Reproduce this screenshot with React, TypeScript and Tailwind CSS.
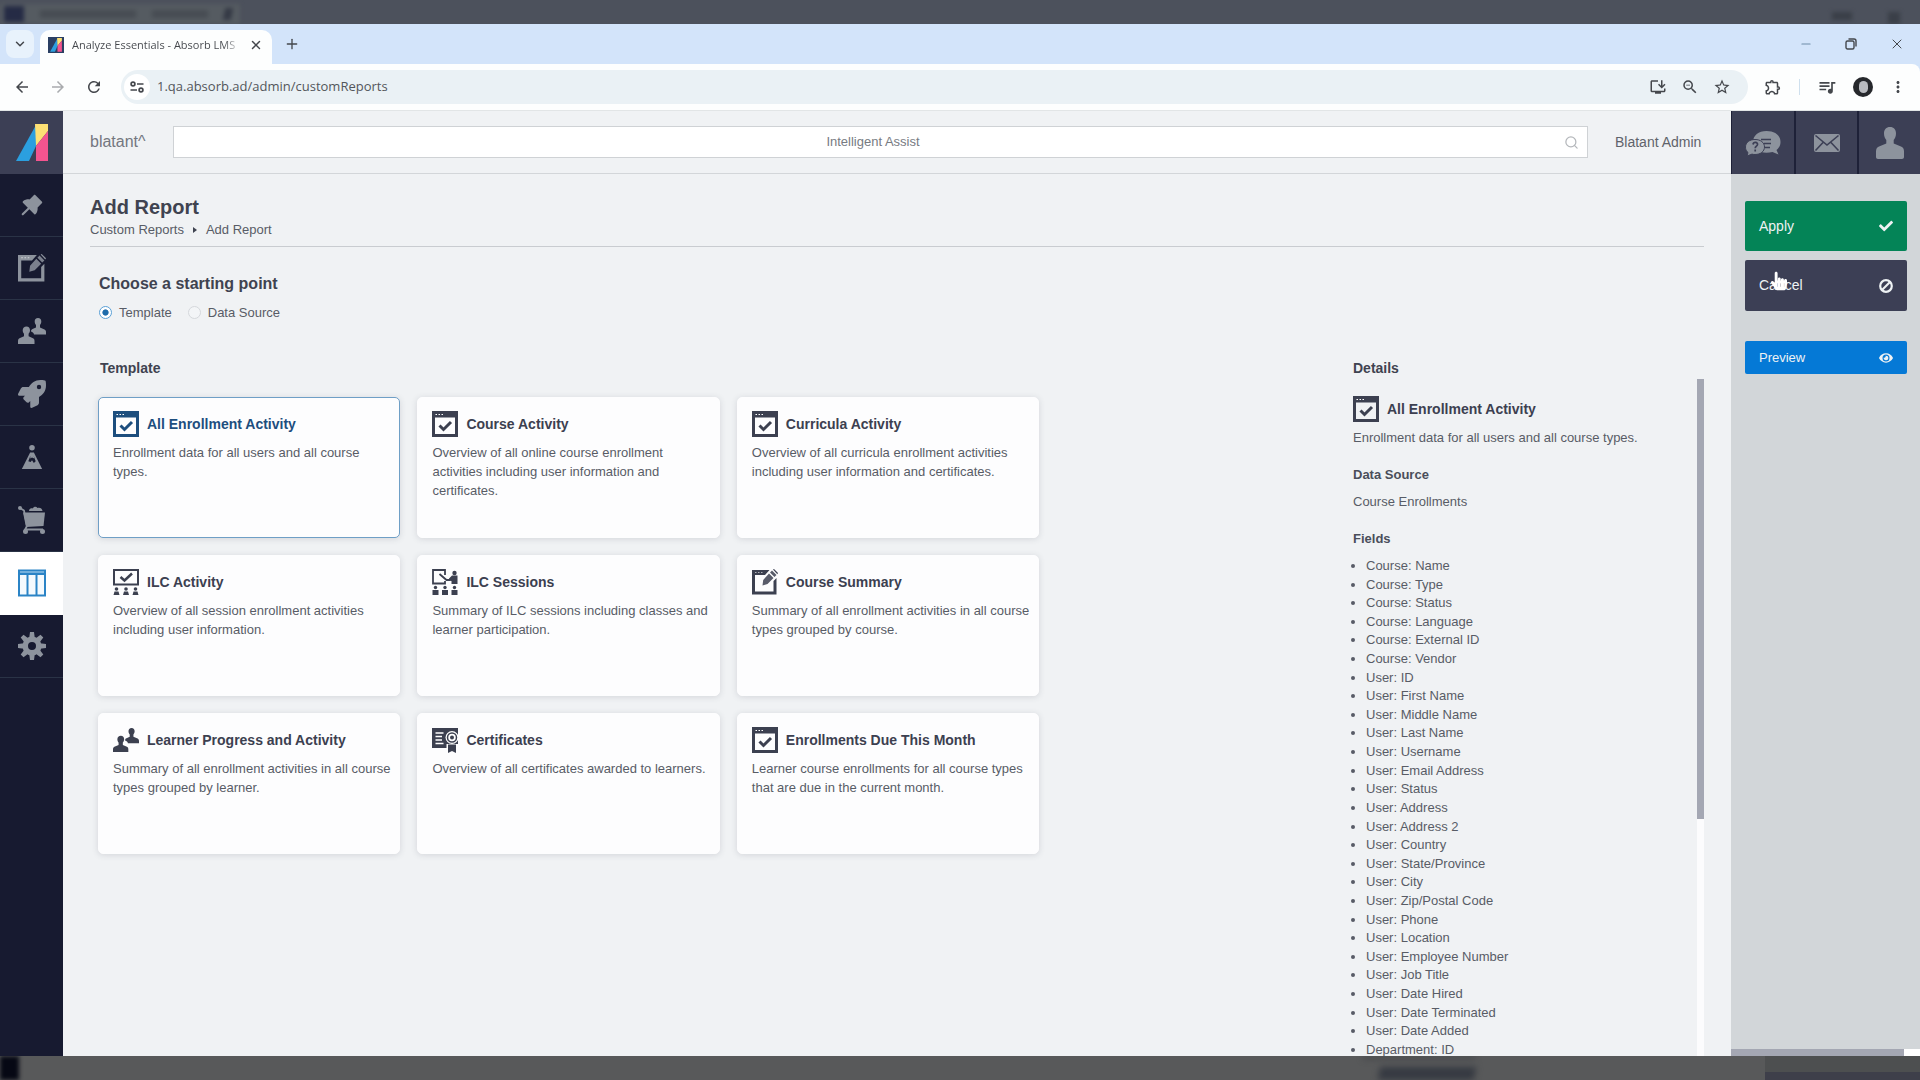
import type { ReactNode } from "react"
import clsx from "clsx"
import { AiFillPushpin } from "react-icons/ai"
import { FaCheck, FaEye, FaHandPointer, FaRocket } from "react-icons/fa"
import {
  MdArrowBack,
  MdArrowForward,
  MdInstallDesktop,
  MdMoreVert,
  MdOutlineExtension,
  MdQueueMusic,
  MdRefresh,
  MdStarBorder,
  MdZoomOut,
} from "react-icons/md"
import { ChevronDown, Minus, Plus, Search, X } from "lucide-react"

type IconProps = { className?: string }

function AbsorbLogo({ className }: IconProps) {
  return (
    <svg viewBox="0 0 32 38" className={className} aria-hidden="true">
      <path d="M20 1v21L13 37H0z" fill="#2b9fdf" />
      <path d="M19 0h13v7L20 22z" fill="#fde074" />
      <path d="M32 7v30H20V22z" fill="#f4548f" />
    </svg>
  )
}

function WindowCheckIcon({ className }: IconProps) {
  return (
    <svg viewBox="0 0 26 26" className={className} aria-hidden="true">
      <path fillRule="evenodd" fill="currentColor" d="M0 0h26v26H0zM3 6.500v16.500h20V6.500z" />
      <path d="M3.500 3.500h1.500M6.500 3.500h1.500M9.500 3.500h1.500" stroke="#fff" strokeWidth="1.200" />
      <path d="M7.500 14.500l4 4 7.500-7.500" fill="none" stroke="currentColor" strokeWidth="3" />
    </svg>
  )
}

function WindowEditIcon({ className }: IconProps) {
  return (
    <svg viewBox="0 0 26 26" className={className} aria-hidden="true">
      <path
        fill="currentColor"
        d="M0 1h17.500l-4.500 5H3v16.500h18.500V12l3-3v16.500H0z"
      />
      <path d="M3 3.500h1.500M6 3.500h1.500M9 3.500h1.500" stroke="#fff" strokeWidth="1" opacity="0.600" />
      <path fill="currentColor" d="M20 1.500l4.500 4.500-2 2L18 3.500zM17 4.500l4.500 4.500-6 6-5 1.500.7-5.500z" opacity="0.850" />
      <path fill="currentColor" d="M21 .5l1-.5 4 4-.7 1.200z" />
    </svg>
  )
}

function PresentationIcon({ className }: IconProps) {
  return (
    <svg viewBox="0 0 26 26" className={className} aria-hidden="true">
      <path d="M1 1h24v14.500H1z" fill="none" stroke="currentColor" strokeWidth="2" />
      <path d="M7.500 8l4 3.500L19 4.500" fill="none" stroke="currentColor" strokeWidth="2.500" />
      <g fill="currentColor">
        <circle cx="3.500" cy="20" r="1.800" />
        <circle cx="13" cy="20" r="1.800" />
        <circle cx="22.500" cy="20" r="1.800" />
        <path d="M.5 26l1-3.500h4l1 3.500zM10 26l1-3.500h4l1 3.500zM19.500 26l1-3.500h4l1 3.500z" />
      </g>
    </svg>
  )
}

function SessionsIcon({ className }: IconProps) {
  return (
    <svg viewBox="0 0 26 26" className={className} aria-hidden="true">
      <path d="M13 6V1H1v13.500h12V12M7.500 5l7 6h4" fill="none" stroke="currentColor" strokeWidth="1.800" />
      <g fill="currentColor">
        <circle cx="22.500" cy="4" r="2.200" />
        <path d="M20 6.500h5.500V15h-6v-3L17 11.500V9.500zM.5 21h6v5h-6zM10 21h6v5h-6zM19.500 21h6v5h-6z" />
        <circle cx="3.500" cy="18.500" r="1.700" />
        <circle cx="13" cy="18.500" r="1.700" />
        <circle cx="22.500" cy="18.500" r="1.700" />
      </g>
    </svg>
  )
}

function PeopleIcon({ className }: IconProps) {
  return (
    <svg viewBox="0 0 28 26" className={className} aria-hidden="true" fill="currentColor">
      <path d="M20 0c2.200 0 3.300 1.500 3.300 3.500 0 1.500-.6 2.500-1.300 3.500v2.500l4.500 2c1 .5 1.500 1.500 1.500 2.500v2.500h-12c0-1.500-1.500-2.500-3-3 0-1.500.5-2 1.500-2.500l3.500-1.500V7c-.8-1-1.300-2-1.300-3.500C16.700 1.500 17.800 0 20 0z" />
      <path d="M8.500 8.500c2.200 0 3.500 1.500 3.500 3.700 0 1.500-.6 2.600-1.400 3.600v2.500l4.400 1.900c1.200.5 1.500 1.500 1.500 2.800v3H0v-3c0-1.300.5-2.300 1.500-2.800l4.500-1.900v-2.500c-.8-1-1.300-2.100-1.300-3.600 0-2.200 1.600-3.700 3.800-3.700z" />
    </svg>
  )
}

function CertificateIcon({ className }: IconProps) {
  return (
    <svg viewBox="0 0 26 26" className={className} aria-hidden="true">
      <path d="M0 1h26v20H0z" fill="currentColor" />
      <path d="M3.500 6h8M3.500 9.500h6.500M3.500 13h6.500M3.500 16.500h8" stroke="#fff" strokeWidth="1.500" />
      <path d="M14.500 17h11.500v5H14.500z" fill="#fff" />
      <circle cx="20" cy="10.500" r="6.500" fill="#fff" />
      <circle cx="20" cy="10.500" r="4.500" fill="none" stroke="currentColor" strokeWidth="1.500" />
      <circle cx="20" cy="10.500" r="2" fill="currentColor" />
      <path d="M16 17.500h8V26l-4-2-4 2z" fill="currentColor" />
    </svg>
  )
}

function PeakIcon({ className }: IconProps) {
  return (
    <svg viewBox="0 0 22 26" className={className} aria-hidden="true">
      <circle cx="11" cy="3" r="3" fill="currentColor" />
      <path d="M9 8h4l9 18H0z" fill="currentColor" />
      <path d="M7 17.500l2-5h4l2 5-2 2-2-3-1.500 2z" fill="#171a30" />
      <path d="M9.500 10.500h3l1 4-2.500-1-2 1z" fill="currentColor" />
    </svg>
  )
}

function CartIcon({ className }: IconProps) {
  return (
    <svg viewBox="0 0 28 28" className={className} aria-hidden="true">
      <g fill="currentColor">
        <path d="M5 6.500h22L25.500 20 8 21z" />
        <path d="M11 5c0-2 2-3 3.500-2.500C16 .5 18 0 19.500 2c2-1 4.500 0 5 3z" />
        <circle cx="2" cy="2" r="2" />
        <circle cx="7.500" cy="25.500" r="2.500" />
        <circle cx="24.500" cy="25.500" r="2.500" />
      </g>
      <path d="M2 2l4 2.500L9 20l-2 3.500h18" fill="none" stroke="currentColor" strokeWidth="1.800" />
    </svg>
  )
}

function ColumnsIcon({ className }: IconProps) {
  return (
    <svg viewBox="0 0 28 27" className={className} aria-hidden="true">
      <path d="M0 0h28v27H0z" fill="#2b84c6" />
      <path d="M2 5.500h6.500V25H2zM10.500 5.500h7V25h-7zM19.500 5.500H26V25h-6.500z" fill="#f4fafe" />
      <path d="M2 2.500h24" stroke="#8dbfe4" strokeWidth="1.500" />
    </svg>
  )
}

function GearIcon({ className }: IconProps) {
  return (
    <svg viewBox="0 0 28 28" className={className} aria-hidden="true" fill="currentColor">
      <path d="M12 0h4l.8 6h-5.600zM12 28h4l.8-6h-5.600zM0 12v4l6 .8v-5.600zM28 12v4l-6 .8v-5.600z" />
      <path d="M2.700 5.500l2.800-2.800L10.500 6.500 6.500 10.500zM25.300 5.500l-2.800-2.800-5 3.800 4 4zM2.700 22.500l2.800 2.800 5-3.800-4-4zM25.300 22.500l-2.800 2.800-5-3.800 4-4z" />
      <path fillRule="evenodd" d="M14 4.500a9.500 9.500 0 1 0 0 19 9.500 9.500 0 0 0 0-19zM14 10a4 4 0 1 1 0 8 4 4 0 0 1 0-8z" />
    </svg>
  )
}

function CancelIcon({ className }: IconProps) {
  return (
    <svg viewBox="0 0 14 14" className={className} aria-hidden="true" fill="none" stroke="currentColor" strokeWidth="2.200">
      <circle cx="7" cy="7" r="5.800" />
      <path d="M11 3l-8 8" />
    </svg>
  )
}

function ChatIcon({ className }: IconProps) {
  return (
    <svg viewBox="0 0 36 26" className={className} aria-hidden="true">
      <path
        d="M21.500 1C30 1 35.500 5.500 35.500 12c0 3.500-1.500 6-4 8l2 4.500-6-2.500c-2 .6-4 .8-6 .8-8 0-13.500-4.300-13.500-10.800S13.500 1 21.500 1z"
        fill="currentColor"
      />
      <path d="M16 9.500h10M19 13.500h7M20 17.500h5" stroke="#3c3f55" strokeWidth="1.500" />
      <path
        d="M10 9.500c5.500 0 9.500 3 9.500 7.500s-4 7.500-9.500 7.500c-1 0-2 0-3-.4L2 26l1-3.500C1.200 21 .5 19.500.5 17c0-4.500 4-7.500 9.500-7.500z"
        fill="currentColor"
        stroke="#3c3f55"
      />
      <path d="M8 14.500c.5-3 5-2.500 4.500.2-.3 1.500-2.300 1.500-2.300 3.500M10.200 19.500v2" fill="none" stroke="#3c3f55" strokeWidth="1.700" />
    </svg>
  )
}

function MailIcon({ className }: IconProps) {
  return (
    <svg viewBox="0 0 26 18" className={className} aria-hidden="true">
      <rect width="26" height="18" rx="2" fill="currentColor" />
      <path d="M1.500 1.500L13 11 24.500 1.500M1.500 16.500l7.500-8M24.500 16.500l-7.500-8" fill="none" stroke="#3c3f55" strokeWidth="1.600" />
    </svg>
  )
}

function PersonIcon({ className }: IconProps) {
  return (
    <svg viewBox="0 0 28 32" className={className} aria-hidden="true" fill="currentColor">
      <path d="M14 0c3.800 0 6 2.600 6 6.500 0 3-1 5-2.300 6.500v3.500l7.300 3c2 .9 3 2.500 3 4.800V30c0 1.200-.8 2-2 2H2c-1.200 0-2-.8-2-2v-5.700c0-2.300 1-3.900 3-4.800l7.300-3V13C9 11.500 8 9.500 8 6.500 8 2.600 10.200 0 14 0z" />
    </svg>
  )
}

function SiteInfoIcon({ className }: IconProps) {
  return (
    <svg viewBox="0 0 14 12" className={className} aria-hidden="true" fill="none" stroke="currentColor" strokeWidth="1.700">
      <circle cx="3" cy="3" r="1.900" />
      <path d="M7 3h6.500M.5 9H7" />
      <circle cx="11" cy="9" r="1.900" />
    </svg>
  )
}

function RestoreIcon({ className }: IconProps) {
  return (
    <svg viewBox="0 0 12 12" className={className} aria-hidden="true" fill="none" stroke="currentColor" strokeWidth="1.400">
      <rect x="1" y="3" width="8" height="8" rx="1.500" />
      <path d="M3.500 1H9a2 2 0 0 1 2 2v5.500" />
    </svg>
  )
}

const navItems = [
  { name: "Pinned", icon: <AiFillPushpin className="size-7" /> },
  { name: "Courses", icon: <WindowEditIcon className="size-7" /> },
  { name: "Users", icon: <PeopleIcon className="size-7" /> },
  { name: "Launch", icon: <FaRocket className="size-7" /> },
  { name: "Goals", icon: <PeakIcon className="size-6" /> },
  { name: "E-Commerce", icon: <CartIcon className="size-7" /> },
  { name: "Reports", icon: <ColumnsIcon className="size-7" />, active: true },
  { name: "Setup", icon: <GearIcon className="size-7" /> },
]

const templates = [
  { title: "All Enrollment Activity", text: "Enrollment data for all users and all course types.", Icon: WindowCheckIcon, selected: true },
  {
    title: "Course Activity",
    text: "Overview of all online course enrollment activities including user information and certificates.",
    Icon: WindowCheckIcon,
  },
  {
    title: "Curricula Activity",
    text: "Overview of all curricula enrollment activities including user information and certificates.",
    Icon: WindowCheckIcon,
  },
  {
    title: "ILC Activity",
    text: "Overview of all session enrollment activities including user information.",
    Icon: PresentationIcon,
  },
  {
    title: "ILC Sessions",
    text: "Summary of ILC sessions including classes and learner participation.",
    Icon: SessionsIcon,
  },
  {
    title: "Course Summary",
    text: "Summary of all enrollment activities in all course types grouped by course.",
    Icon: WindowEditIcon,
  },
  {
    title: "Learner Progress and Activity",
    text: "Summary of all enrollment activities in all course types grouped by learner.",
    Icon: PeopleIcon,
  },
  { title: "Certificates", text: "Overview of all certificates awarded to learners.", Icon: CertificateIcon },
  {
    title: "Enrollments Due This Month",
    text: "Learner course enrollments for all course types that are due in the current month.",
    Icon: WindowCheckIcon,
  },
]

const fields = [
  "Course: Name",
  "Course: Type",
  "Course: Status",
  "Course: Language",
  "Course: External ID",
  "Course: Vendor",
  "User: ID",
  "User: First Name",
  "User: Middle Name",
  "User: Last Name",
  "User: Username",
  "User: Email Address",
  "User: Status",
  "User: Address",
  "User: Address 2",
  "User: Country",
  "User: State/Province",
  "User: City",
  "User: Zip/Postal Code",
  "User: Phone",
  "User: Location",
  "User: Employee Number",
  "User: Job Title",
  "User: Date Hired",
  "User: Date Terminated",
  "User: Date Added",
  "Department: ID",
]

function BrowserChrome() {
  return (
    <div className="shrink-0 bg-[#d3e4fa] font-['Open_Sans',sans-serif] text-[#44474c]">
      <div className="flex h-10 items-end pl-[6px]">
        <button aria-label="Search tabs" className="mb-[6px] flex size-7 items-center justify-center rounded-lg bg-[#e8f2fc]">
          <ChevronDown className="size-[14px]" strokeWidth={2.5} />
        </button>
        <div className="ml-[6px] flex h-[34px] w-[232px] items-center rounded-t-[10px] bg-[#fdfefe] pr-[9px] pb-[5px] pl-2">
          <span className="flex size-4 items-center justify-center bg-[#2a3f63]">
            <AbsorbLogo className="h-[14px] w-3" />
          </span>
          <span className="ml-2 flex-1 bg-gradient-to-r from-[#44474c] from-90% to-transparent bg-clip-text text-[11px] leading-4 whitespace-nowrap text-transparent">
            Analyze Essentials - Absorb LMS
          </span>
          <button aria-label="Close tab" className="ml-2">
            <X className="size-[14px]" strokeWidth={2.5} />
          </button>
        </div>
        <button aria-label="New tab" className="mb-3 ml-3">
          <Plus className="size-4" />
        </button>
        <div className="mb-3 ml-auto flex items-center gap-8 pr-[15px]">
          <button aria-label="Minimize">
            <Minus className="size-[14px] text-[#6e8ca8]" />
          </button>
          <button aria-label="Restore">
            <RestoreIcon className="size-3" />
          </button>
          <button aria-label="Close window">
            <X className="size-4" strokeWidth={1.5} />
          </button>
        </div>
      </div>
      <div className="flex h-[47px] items-center rounded-tr-lg border-b border-[#e2e5e6] bg-[#fdfefe] pl-[13px]">
        <button aria-label="Back" className="w-9">
          <MdArrowBack className="size-[18px]" />
        </button>
        <button aria-label="Forward" className="w-9 text-[#a9abae]">
          <MdArrowForward className="size-[18px]" />
        </button>
        <button aria-label="Reload" className="w-9">
          <MdRefresh className="size-[18px]" />
        </button>
        <div className="flex h-[34px] flex-1 items-center rounded-full bg-[#eaf1f5] pr-[17px] pl-[3px]">
          <button aria-label="Site information" className="flex size-[26px] items-center justify-center rounded-full bg-white">
            <SiteInfoIcon className="h-3 w-[14px]" />
          </button>
          <input
            aria-label="Address"
            readOnly
            defaultValue="1.qa.absorb.ad/admin/customReports"
            className="ml-[7px] flex-1 bg-transparent text-[13px] text-[#53565b] outline-none"
          />
          <div className="flex items-center gap-[14px]">
            <MdInstallDesktop className="size-[18px]" />
            <MdZoomOut className="size-[18px]" />
            <MdStarBorder className="size-[18px]" />
          </div>
        </div>
        <div className="flex items-center pr-[13px] pl-4">
          <MdOutlineExtension className="size-[18px]" />
          <span className="mx-[17px] h-4 w-px bg-[#cfe0ee]" />
          <MdQueueMusic className="size-5" />
          <span className="ml-4 flex size-5 items-center justify-center rounded-full bg-[#26282c]">
            <span className="h-3 w-[9px] rounded-full bg-[#b9bbc0]" />
          </span>
          <button aria-label="Browser menu" className="ml-4">
            <MdMoreVert className="size-[18px]" />
          </button>
        </div>
      </div>
    </div>
  )
}

function Sidebar() {
  return (
    <nav className="w-[63px] shrink-0 bg-[#171a30] text-[#8d939d]">
      <a href="#home" aria-label="Absorb" className="flex h-[63px] items-center justify-center bg-[#3c3f55]">
        <AbsorbLogo className="h-[38px] w-8" />
      </a>
      {navItems.map((item) => (
        <a
          key={item.name}
          href="#nav"
          aria-label={item.name}
          className={clsx(
            "flex h-[63px] items-center justify-center border-b",
            item.active ? "border-white bg-white" : "border-[#2a3346]",
          )}
        >
          {item.icon}
        </a>
      ))}
    </nav>
  )
}

function TemplateTitle({ icon, children }: { icon: ReactNode; children: ReactNode }) {
  return (
    <span className="flex items-center gap-2 text-[14px] leading-[26px] font-bold">
      {icon}
      {children}
    </span>
  )
}

function Details() {
  return (
    <aside className="flex min-h-0 w-[351px] shrink-0 flex-col">
      <h2 className="text-[14px] leading-[22px] font-bold text-[#3f4350]">Details</h2>
      <div className="flex min-h-0 flex-1">
        <div className="-ml-2 flex-1 overflow-hidden pt-[17px] pl-2">
          <div className="text-[#3c4050]">
            <TemplateTitle icon={<WindowCheckIcon className="size-[26px]" />}>All Enrollment Activity</TemplateTitle>
          </div>
          <p className="mt-[6px]">Enrollment data for all users and all course types.</p>
          <h3 className="mt-[18px] font-bold text-[#4a4e5a]">Data Source</h3>
          <p className="mt-2">Course Enrollments</p>
          <h3 className="mt-[18px] font-bold text-[#4a4e5a]">Fields</h3>
          <ul className="mt-[9px] flex h-[502px] list-disc flex-col justify-between pl-[13px] leading-[18px]">
            {fields.map((field) => (
              <li key={field}>{field}</li>
            ))}
          </ul>
        </div>
        <div className="w-[7px] bg-[#fcfcfd]">
          <div className="h-[65%] bg-[#a4a7b3]" />
        </div>
      </div>
    </aside>
  )
}

function Main() {
  return (
    <main className="flex min-h-0 flex-1 flex-col px-[27px] pt-5 text-[13px] leading-[19px] text-[#585c66]">
      <div className="border-b border-[#c9ccd0] pb-[7px]">
        <h1 className="text-[20px] leading-[26px] font-bold text-[#3f4350]">Add Report</h1>
        <div className="flex items-center">
          <a href="#reports">Custom Reports</a>
          <span className="mx-[9px] border-y-[3px] border-l-4 border-y-transparent border-l-[#3f4350]" />
          <span>Add Report</span>
        </div>
      </div>
      <div className="flex min-h-0 flex-1 flex-col pt-[25px] pl-2">
        <fieldset className="pl-px">
          <legend className="text-[16px] leading-6 font-bold text-[#3f4350]">Choose a starting point</legend>
          <div className="mt-[7px] flex gap-4">
            <label className="flex items-center gap-[7px]">
              <input
                type="radio"
                name="start"
                defaultChecked
                className="size-[13px] appearance-none rounded-full border border-[#5aa0d6] bg-white checked:bg-[radial-gradient(circle,#1f6cab_35%,white_45%)]"
              />
              Template
            </label>
            <label className="flex items-center gap-[7px]">
              <input type="radio" name="start" className="size-[13px] appearance-none rounded-full border border-[#d5d8dc] bg-[#f3f5f7]" />
              Data Source
            </label>
          </div>
        </fieldset>
        <div className="mt-[35px] flex min-h-0 flex-1">
          <section className="flex-1">
            <h2 className="pl-0.5 text-[14px] leading-[22px] font-bold text-[#3f4350]">Template</h2>
            <div className="mt-[18px] grid w-3/4 grid-cols-3 gap-x-[17px] gap-y-[17px]">
              {templates.map(({ title, text, Icon, selected }) => (
                <button
                  key={title}
                  className={clsx(
                    "flex h-[141px] flex-col rounded-[5px] border bg-[#fdfdfe] py-[13px] pr-2 pl-[14px] text-left shadow-[0_1px_6px_rgba(60,70,90,0.16)]",
                    selected ? "border-[#6f9fc6] text-[#1d4e7e]" : "border-[#fdfdfe] text-[#3c4050]",
                  )}
                >
                  <TemplateTitle icon={<Icon className="size-[26px]" />}>{title}</TemplateTitle>
                  <span className="mt-[6px] text-[#585c66]">{text}</span>
                </button>
              ))}
            </div>
          </section>
          <Details />
        </div>
      </div>
    </main>
  )
}

function ActionPanel() {
  return (
    <div className="flex w-[189px] shrink-0 flex-col bg-[#d2d6d9]">
      <div className="grid h-[63px] grid-cols-3 bg-[#3c3f55] text-[#8d939d]">
        <button aria-label="Help" className="flex items-center justify-center border-l border-[#1e2138]">
          <ChatIcon className="h-[26px] w-9" />
        </button>
        <button aria-label="Messages" className="flex items-center justify-center border-l-2 border-[#1e2138]">
          <MailIcon className="h-[18px] w-[26px]" />
        </button>
        <button aria-label="Profile" className="flex items-center justify-center border-l-2 border-[#1e2138]">
          <PersonIcon className="h-8 w-7" />
        </button>
      </div>
      <div className="flex flex-1 flex-col pt-[27px] pr-[13px] pl-[14px] text-[14px] text-[#eef2f4]">
        <button className="flex h-[50px] items-center justify-between rounded-[2px] bg-[#048457] px-[14px]">
          Apply
          <FaCheck className="size-[14px]" />
        </button>
        <button className="relative mt-[9px] flex h-[51px] items-center justify-between rounded-[2px] bg-[#3c3f55] px-[14px]">
          Cancel
          <CancelIcon className="size-[14px]" />
          <FaHandPointer className="absolute top-[10px] left-[26px] h-[22px] w-4 text-white" />
        </button>
        <button className="mt-[30px] flex h-[33px] items-center justify-between rounded-[2px] bg-[#0579d6] px-[14px] text-[13px]">
          Preview
          <FaEye className="size-[14px]" />
        </button>
      </div>
      <div className="h-[7px] bg-white">
        <div className="h-full w-11/12 bg-[#a4a7b3]" />
      </div>
    </div>
  )
}

export default function App() {
  return (
    <div className="flex h-screen flex-col overflow-hidden font-['Liberation_Sans',Arial,sans-serif]">
      <div className="flex h-6 shrink-0 items-end justify-between overflow-hidden bg-[#4c515c] pr-5">
        <div className="flex h-5 w-60 items-center gap-4 bg-[#555b61] pl-1 blur-[2px]">
          <span className="h-4 w-5 bg-[#252b45]" />
          <span className="h-2 w-24 bg-[#474c53]" />
          <span className="h-2 w-14 bg-[#474c53]" />
          <span className="h-3 w-2 -skew-x-12 bg-[#343945]" />
        </div>
        <div className="flex gap-9 blur-[2px]">
          <span className="h-2 w-5 bg-[#3a3f48]" />
          <span className="h-3 w-3 bg-[#3a3f48]" />
        </div>
      </div>
      <BrowserChrome />
      <div className="flex min-h-0 flex-1 bg-[#f0f2f4]">
        <Sidebar />
        <div className="flex min-w-0 flex-1 flex-col">
          <header className="flex h-[63px] shrink-0 items-center border-b border-[#d3d6d9] px-[27px]">
            <span className="w-[83px] text-[16px] text-[#74777f]">blatant^</span>
            <div className="flex h-8 flex-1 items-center border border-[#cfd2d5] bg-white pr-2">
              <input
                aria-label="Intelligent Assist"
                placeholder="Intelligent Assist"
                className="flex-1 pl-2 text-center text-[13px] outline-none placeholder:text-[#777b82]"
              />
              <Search className="size-[15px] text-[#b4b7bb]" />
            </div>
            <span className="w-[116px] pl-[27px] text-[14px] text-[#5f636b]">Blatant Admin</span>
          </header>
          <Main />
        </div>
        <ActionPanel />
      </div>
      <div className="flex h-6 shrink-0 overflow-hidden bg-[#58595a]">
        <div className="w-[19px] bg-[#060814] blur-[2px]" />
        <div className="flex flex-1 justify-end pr-[290px]">
          <div className="flex flex-col items-end blur-[3px]">
            <span className="h-1 w-28 bg-[#414347]" />
            <span className="mt-2 h-4 w-24 -skew-x-12 bg-[#363a42]" />
          </div>
        </div>
        <div className="flex w-[155px] flex-col justify-end bg-[#4d4f50]">
          <div className="h-2 bg-[#3e3f4a]" />
        </div>
      </div>
    </div>
  )
}
